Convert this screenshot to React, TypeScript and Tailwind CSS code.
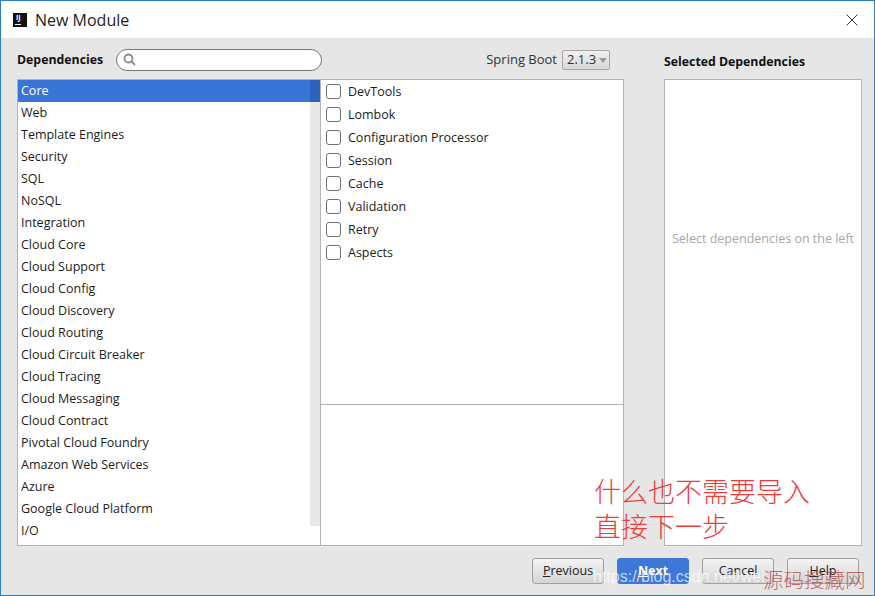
import { X } from "lucide-react";

const categories = [
  "Core", "Web", "Template Engines", "Security", "SQL", "NoSQL", "Integration",
  "Cloud Core", "Cloud Support", "Cloud Config", "Cloud Discovery", "Cloud Routing",
  "Cloud Circuit Breaker", "Cloud Tracing", "Cloud Messaging", "Cloud Contract",
  "Pivotal Cloud Foundry", "Amazon Web Services", "Azure", "Google Cloud Platform", "I/O",
];

const deps = ["DevTools", "Lombok", "Configuration Processor", "Session", "Cache", "Validation", "Retry", "Aspects"];

function Logo() {
  return (
    <div className="relative w-[14px] h-[14px] bg-[#111]">
      <span className="absolute left-[3px] top-[0px] text-[7px] leading-[9px] font-bold text-white">IJ</span>
      <span className="absolute left-[2px] bottom-[2px] w-[6px] h-px bg-white" />
    </div>
  );
}

function DialogButton({ label, hint, primary }: { label: string; hint?: boolean; primary?: boolean }) {
  const cls = primary
    ? "bg-[#3d78d8] border-[#3d78d8] text-white font-bold"
    : "bg-gradient-to-b from-[#f4f4f4] to-[#d4d4d4] border-[#a0a0a0] text-[#222]";
  return (
    <button className={`w-[72px] h-[26px] rounded-[3px] border text-[12.5px] leading-none ${cls}`}>
      {hint ? <span className="underline">{label[0]}</span> : null}
      {hint ? label.slice(1) : label}
    </button>
  );
}

export default function App() {
  return (
    <div className="relative w-[875px] h-[596px] overflow-hidden flex flex-col border border-[#2b7fc9] bg-[#e6e6e6] text-[12.5px] text-[#1c1c1c] font-['Open_Sans','Noto_Sans',sans-serif]">
      <header className="h-[37px] shrink-0 bg-white flex items-center pl-[12px] pr-[12px]">
        <Logo />
        <h1 className="ml-[8px] text-[16px] text-[#222]">New Module</h1>
        <X className="ml-auto w-[20px] h-[20px] text-[#222]" strokeWidth={1.1} />
      </header>

      <div className="flex-1 flex flex-col pl-[16px] pr-[12px]">
        <div className="h-[41px] shrink-0 flex items-center pt-[2px]">
          <div className="w-[303px] shrink-0 flex items-center">
            <span className="font-bold text-[#111] w-[99px] shrink-0 text-[12.3px] pt-[2px]">Dependencies</span>
            <div className="w-[206px] h-[22px] shrink-0 rounded-full border border-[#777] bg-white flex items-center pl-[5px]">
              <svg width="15" height="15" viewBox="0 0 15 15" fill="none" stroke="#8a8a8a" strokeWidth="1.8">
                <circle cx="6.5" cy="6.5" r="4" />
                <path d="M9.5 9.5 13 13" />
              </svg>
            </div>
          </div>
          <div className="w-[304px] shrink-0 flex items-center justify-end pr-[14px] mt-[1px] text-[13px]">
            <span className="text-[#333]">Spring Boot</span>
            <div className="ml-[5px] w-[48px] h-[20px] rounded-[2px] border border-[#a5a5a5] bg-gradient-to-b from-[#f0f0f0] to-[#d8d8d8] flex items-center pl-[4px] text-[#333]">
              2.1.3
              <svg className="ml-[3px]" width="8" height="5" viewBox="0 0 8 5"><path d="M0 0h8L4 5z" fill="#999" /></svg>
            </div>
          </div>
          <span className="ml-[40px] mt-[5px] font-bold text-[#111] text-[12.3px]">Selected Dependencies</span>
        </div>

        <div className="h-[467px] shrink-0 flex">
          <div className="relative w-[303px] bg-white border border-[#b4b4b4] border-r-0">
            <div className="absolute right-0 top-0 w-[10px] h-[446px] bg-[#e8e8e8]" />
            <ul className="relative">
              {categories.map((c, i) => (
                <li key={c} className={`h-[22px] leading-[21px] pl-[3px] ${i === 0 ? "bg-[#3875d7] text-white" : ""}`}>
                  {c}
                </li>
              ))}
            </ul>
            <div className="absolute right-0 top-0 w-[10px] h-[22px] bg-[#2c63bd]" />
          </div>

          <div className="w-[304px] flex flex-col bg-white border border-[#b4b4b4]">
            <div className="h-[325px] shrink-0 border-b border-[#b4b4b4] pl-[5px] pt-[1px]">
              {deps.map((d) => (
                <label key={d} className="h-[23px] flex items-center">
                  <span className="w-[15px] h-[15px] rounded-[3px] border border-[#707070] bg-white -mt-[2px]" />
                  <span className="ml-[7px]">{d}</span>
                </label>
              ))}
            </div>
          </div>

          <div className="ml-[40px] w-[198px] bg-white border border-[#b4b4b4] flex justify-center pt-[150px]">
            <span className="text-[12.5px] leading-[18px] text-[#a8a8a8] whitespace-nowrap">Select dependencies on the left</span>
          </div>
        </div>

        <footer className="flex-1 flex items-start justify-end gap-[13px] pt-[12px] pr-[3px]">
          <DialogButton label="Previous" hint />
          <DialogButton label="Next" hint primary />
          <DialogButton label="Cancel" />
          <DialogButton label="Help" hint />
        </footer>
      </div>

      <div className="absolute left-[593px] top-[472px] text-[27px] leading-[35px] text-[#ee3c3c] font-['Noto_Sans_CJK_SC',sans-serif] font-light whitespace-nowrap">
        <div>什么也不需要导入</div>
        <div>直接下一步</div>
      </div>
      <div className="absolute left-[592px] top-[566px] text-[16px] leading-[20px] text-white/70 whitespace-nowrap font-['Liberation_Sans',sans-serif]">
        https://blog.csdn.net/wei
      </div>
      <div className="absolute left-[762px] top-[566px] text-[20.5px] leading-[24px] text-[#b04a4a]/80 font-['Noto_Sans_CJK_SC',sans-serif] font-light whitespace-nowrap">
        源码搜藏网
      </div>
    </div>
  );
}
